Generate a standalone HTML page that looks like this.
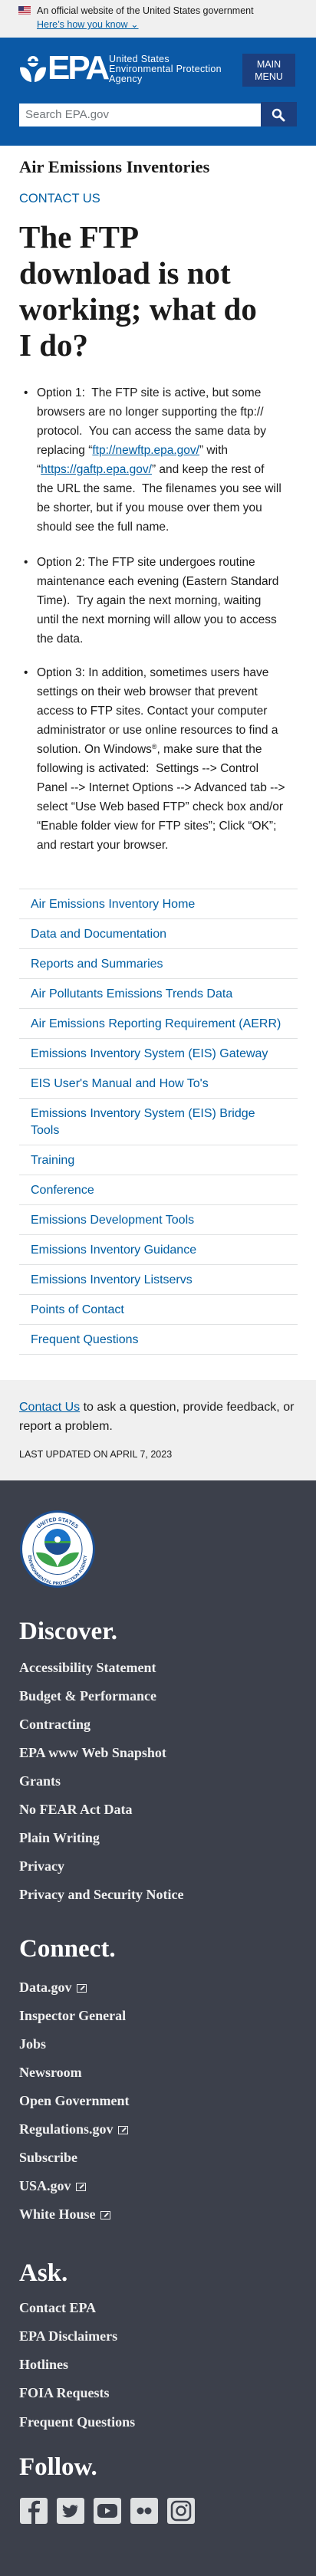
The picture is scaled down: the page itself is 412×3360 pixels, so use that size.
<!DOCTYPE html>
<html><head><meta charset="utf-8"><style>
*{margin:0;padding:0;box-sizing:border-box}
body{width:412px;height:3360px;position:relative;background:#fff;font-family:"Liberation Sans",sans-serif;color:#1b1b1b;overflow:hidden}
.a{position:absolute;white-space:nowrap}
.serif{font-family:"Liberation Serif",serif;font-weight:bold}
.nav{position:absolute;left:25px;width:363px;border-top:1px solid #dfe1e2}
.nav div{position:absolute;left:15px;color:#005ea2;font-size:16px;line-height:22px}
.fl{position:absolute;left:25px;color:#f0f0f0;font-family:"Liberation Serif",serif;font-weight:bold;font-size:18px;line-height:22px;white-space:nowrap}
.fh{position:absolute;left:25px;color:#fff;font-family:"Liberation Serif",serif;font-weight:bold;font-size:33px;line-height:36px}
.ext{display:inline-block;width:13px;height:11px;border:1.5px solid #f0f0f0;margin-left:6px;vertical-align:-1px;position:relative}
.ext:after{content:"";position:absolute;left:3px;top:3px;width:7px;height:1.5px;background:#f0f0f0;transform:rotate(-45deg)}
.ic{position:absolute;top:3258px;width:36px;height:34px;background:#dfe1e2;border-radius:3px}
.b{position:absolute;left:48px;font-size:15.5px;line-height:25px;white-space:nowrap}
.b:before{content:"•";position:absolute;left:-17px}
</style></head><body>
<div class="a" style="left:0;top:0;width:412px;height:49px;background:#f0f0f0"></div>
<svg class="a" style="left:24px;top:8px" width="16" height="11" viewBox="0 0 16 11"><rect width="16" height="11" fill="#b22234"/><rect y="1.7" width="16" height="1.2" fill="#fff"/><rect y="4.2" width="16" height="1.2" fill="#fff"/><rect y="6.7" width="16" height="1.2" fill="#fff"/><rect y="9.2" width="16" height="1.2" fill="#fff"/><rect width="7" height="6" fill="#3c3b6e"/></svg>
<div class="a" style="left:48px;top:7px;font-size:12.5px;color:#1b1b1b">An official website of the United States government</div>
<div class="a" style="left:48px;top:24px;font-size:12.5px;color:#005ea2;text-decoration:underline">Here’s how you know <span style="text-decoration:none">⌄</span></div>
<div class="a" style="left:0;top:49px;width:412px;height:141px;background:#0b59a6"></div>
<svg class="a" style="left:24px;top:72px" width="38" height="37" viewBox="0 0 38 37"><circle cx="19" cy="8" r="7" fill="#fff"/><circle cx="19" cy="7" r="2.5" fill="#0b59a6"/><rect x="11" y="8" width="16" height="2" fill="#0b59a6"/><path d="M2 16 C10 14 17 20 17 35 C8 34 2 26 2 16Z M36 16 C28 14 21 20 21 35 C30 34 36 26 36 16Z" fill="#fff"/></svg>
<div class="a" style="left:62px;top:64px;font-size:44px;font-weight:bold;color:#fff;letter-spacing:-3px;line-height:50px">EPA</div>
<div class="a" style="left:142px;top:71px;font-size:12.5px;line-height:13px;color:#fff;letter-spacing:.3px">United States<br>Environmental Protection<br>Agency</div>
<div class="a" style="left:316px;top:70px;width:69px;height:43px;background:#1c3f7e;color:#fff;font-size:12.5px;text-align:center;line-height:16px;padding-top:6px">MAIN<br>MENU</div>
<div class="a" style="left:25px;top:135px;width:315px;height:30px;background:#fff;color:#71767a;font-size:15px;padding:6px 8px">Search EPA.gov</div>
<div class="a" style="left:340px;top:133px;width:47px;height:32px;background:#1c3f7e"></div>
<svg class="a" style="left:354px;top:141px" width="18" height="18" viewBox="0 0 18 18"><circle cx="7" cy="7" r="5" stroke="#fff" stroke-width="2.4" fill="none"/><path d="M10.5 10.5 L16 16" stroke="#fff" stroke-width="3" stroke-linecap="round"/></svg>
<div class="a serif" style="left:25px;top:204px;font-size:22.5px;line-height:28px">Air Emissions Inventories</div>
<div class="a" style="left:25px;top:250px;font-size:16.5px;color:#005ea2">CONTACT US</div>
<div class="a serif" style="left:25px;top:286px;font-size:41px;line-height:47px">The FTP<br>download is not<br>working; what do<br>I do?</div>
<div class="b" style="top:500px">Option 1:&nbsp; The FTP site is active, but some<br>browsers are no longer supporting the ftp://<br>protocol.&nbsp; You can access the same data by<br>replacing “<u style="color:#005ea2">ftp://newftp.epa.gov/</u>” with<br>“<u style="color:#005ea2">https://gaftp.epa.gov/</u>” and keep the rest of<br>the URL the same.&nbsp; The filenames you see will<br>be shorter, but if you mouse over them you<br>should see the full name.</div>
<div class="b" style="top:721px">Option 2: The FTP site undergoes routine<br>maintenance each evening (Eastern Standard<br>Time).&nbsp; Try again the next morning, waiting<br>until the next morning will allow you to access<br>the data.</div>
<div class="b" style="top:865px">Option 3: In addition, sometimes users have<br>settings on their web browser that prevent<br>access to FTP sites. Contact your computer<br>administrator or use online resources to find a<br>solution. On Windows<span style="font-size:9px;position:relative;top:-5px;line-height:0">®</span>, make sure that the<br>following is activated:&nbsp; Settings --&gt; Control<br>Panel --&gt; Internet Options --&gt; Advanced tab --&gt;<br>select “Use Web based FTP” check box and/or<br>“Enable folder view for FTP sites”; Click “OK”;<br>and restart your browser.</div>
<div class="nav" style="top:1159px;height:39px"><div style="top:9px">Air Emissions Inventory Home</div></div>
<div class="nav" style="top:1198px;height:39px"><div style="top:9px">Data and Documentation</div></div>
<div class="nav" style="top:1237px;height:39px"><div style="top:9px">Reports and Summaries</div></div>
<div class="nav" style="top:1276px;height:39px"><div style="top:9px">Air Pollutants Emissions Trends Data</div></div>
<div class="nav" style="top:1315px;height:39px"><div style="top:9px">Air Emissions Reporting Requirement (AERR)</div></div>
<div class="nav" style="top:1354px;height:39px"><div style="top:9px">Emissions Inventory System (EIS) Gateway</div></div>
<div class="nav" style="top:1393px;height:39px"><div style="top:9px">EIS User's Manual and How To's</div></div>
<div class="nav" style="top:1432px;height:61px"><div style="top:9px">Emissions Inventory System (EIS) Bridge<br>Tools</div></div>
<div class="nav" style="top:1493px;height:39px"><div style="top:9px">Training</div></div>
<div class="nav" style="top:1532px;height:39px"><div style="top:9px">Conference</div></div>
<div class="nav" style="top:1571px;height:39px"><div style="top:9px">Emissions Development Tools</div></div>
<div class="nav" style="top:1610px;height:39px"><div style="top:9px">Emissions Inventory Guidance</div></div>
<div class="nav" style="top:1649px;height:39px"><div style="top:9px">Emissions Inventory Listservs</div></div>
<div class="nav" style="top:1688px;height:39px"><div style="top:9px">Points of Contact</div></div>
<div class="nav" style="top:1727px;height:40px;border-bottom:1px solid #dfe1e2"><div style="top:9px">Frequent Questions</div></div>
<div class="a" style="left:0;top:1800px;width:412px;height:131px;background:#f0f0f0"></div>
<div class="a" style="left:25px;top:1823px;font-size:16px;line-height:25px"><u style="color:#005ea2">Contact Us</u> to ask a question, provide feedback, or<br>report a problem.</div>
<div class="a" style="left:25px;top:1890px;font-size:12.5px">LAST UPDATED ON APRIL 7, 2023</div>
<div class="a" style="left:0;top:1931px;width:412px;height:1429px;background:#3c404b"></div>
<svg class="a" style="left:25px;top:1969px" width="100" height="103" viewBox="0 0 100 103"><ellipse cx="50" cy="51.5" rx="49" ry="50.5" fill="#1d4f91"/><ellipse cx="50" cy="51.5" rx="46" ry="47.5" fill="#fff"/><ellipse cx="50" cy="51.5" rx="32" ry="33" fill="none" stroke="#1d4f91" stroke-width="1"/><path d="M33 42 A17 17 0 0 1 67 42Z" fill="#1a73c9"/><path d="M33 42 A17 17 0 0 0 67 42Z" fill="#1d4f91"/><rect x="33" y="41" width="34" height="3" fill="#3ca34a"/><circle cx="50" cy="39" r="4" fill="#fff"/><path d="M50 75 C45 60 35 55 22 56 C25 68 38 74 50 75Z M50 75 C55 60 65 55 78 56 C75 68 62 74 50 75Z" fill="#3ca34a"/><path id="arc" d="M14 52 A36 37 0 0 1 86 52" fill="none"/><text font-size="7" fill="#1d4f91" font-family="Liberation Sans" font-weight="bold"><textPath href="#arc" startOffset="50%" text-anchor="middle">UNITED STATES</textPath></text><path id="arc2" d="M12 60 A38 38 0 0 0 88 60" fill="none"/><text font-size="6" fill="#1d4f91" font-family="Liberation Sans" font-weight="bold"><textPath href="#arc2" startOffset="50%" text-anchor="middle">ENVIRONMENTAL PROTECTION AGENCY</textPath></text></svg>
<div class="fh" style="top:2110px">Discover.</div>
<div class="fl" style="top:2164px">Accessibility Statement</div>
<div class="fl" style="top:2201px">Budget &amp; Performance</div>
<div class="fl" style="top:2238px">Contracting</div>
<div class="fl" style="top:2275px">EPA www Web Snapshot</div>
<div class="fl" style="top:2312px">Grants</div>
<div class="fl" style="top:2349px">No FEAR Act Data</div>
<div class="fl" style="top:2386px">Plain Writing</div>
<div class="fl" style="top:2423px">Privacy</div>
<div class="fl" style="top:2460px">Privacy and Security Notice</div>
<div class="fh" style="top:2524px">Connect.</div>
<div class="fl" style="top:2581px">Data.gov<span class="ext"></span></div>
<div class="fl" style="top:2618px">Inspector General</div>
<div class="fl" style="top:2655px">Jobs</div>
<div class="fl" style="top:2692px">Newsroom</div>
<div class="fl" style="top:2729px">Open Government</div>
<div class="fl" style="top:2766px">Regulations.gov<span class="ext"></span></div>
<div class="fl" style="top:2803px">Subscribe</div>
<div class="fl" style="top:2840px">USA.gov<span class="ext"></span></div>
<div class="fl" style="top:2877px">White House<span class="ext"></span></div>
<div class="fh" style="top:2947px">Ask.</div>
<div class="fl" style="top:2999px">Contact EPA</div>
<div class="fl" style="top:3036px">EPA Disclaimers</div>
<div class="fl" style="top:3073px">Hotlines</div>
<div class="fl" style="top:3110px">FOIA Requests</div>
<div class="fl" style="top:3148px">Frequent Questions</div>
<div class="fh" style="top:3200px">Follow.</div>
<div class="ic" style="left:26px"><svg width="36" height="34" viewBox="0 0 36 34"><path d="M20 34 V19 H25 L26 14 H20 V11 C20 9 21 8 23 8 H26 V4 C24 4 22 3.5 20.5 4 C17 4.5 15 7 15 10.5 V14 H11 V19 H15 V34Z" fill="#3c404b"/></svg></div>
<div class="ic" style="left:74px"><svg width="36" height="34" viewBox="0 0 36 34"><path d="M28 11 C27 11.5 26 11.8 25 12 C26 11.3 26.7 10.4 27 9.3 C26 9.9 25 10.3 23.8 10.5 C21.5 8 17 9.5 17.3 13.5 C13.5 13.3 10.5 11.5 8.5 9 C7.3 11 8 13.5 9.8 14.7 C9 14.7 8.3 14.5 7.7 14.2 C7.7 16.3 9.2 18 11.2 18.4 C10.5 18.6 9.8 18.6 9.1 18.5 C9.7 20.3 11.4 21.5 13.3 21.5 C11.5 22.9 9.3 23.5 7 23.3 C16 29 27 23 26.5 12.8 C27.2 12.3 27.7 11.7 28 11Z" fill="#3c404b"/></svg></div>
<div class="ic" style="left:122px"><svg width="36" height="34" viewBox="0 0 36 34"><rect x="5" y="8" width="26" height="18" rx="5" fill="#3c404b"/><path d="M15 13 L22 17 L15 21Z" fill="#dfe1e2"/></svg></div>
<div class="ic" style="left:170px"><svg width="36" height="34" viewBox="0 0 36 34"><circle cx="13" cy="17" r="4.5" fill="#3c404b"/><circle cx="23" cy="17" r="4.5" fill="#3c404b"/></svg></div>
<div class="ic" style="left:218px"><svg width="36" height="34" viewBox="0 0 36 34"><rect x="6" y="5" width="24" height="24" rx="6" fill="none" stroke="#3c404b" stroke-width="2.5"/><circle cx="18" cy="17" r="5.5" fill="none" stroke="#3c404b" stroke-width="2.5"/><circle cx="25" cy="10" r="1.5" fill="#3c404b"/></svg></div>
</body></html>
